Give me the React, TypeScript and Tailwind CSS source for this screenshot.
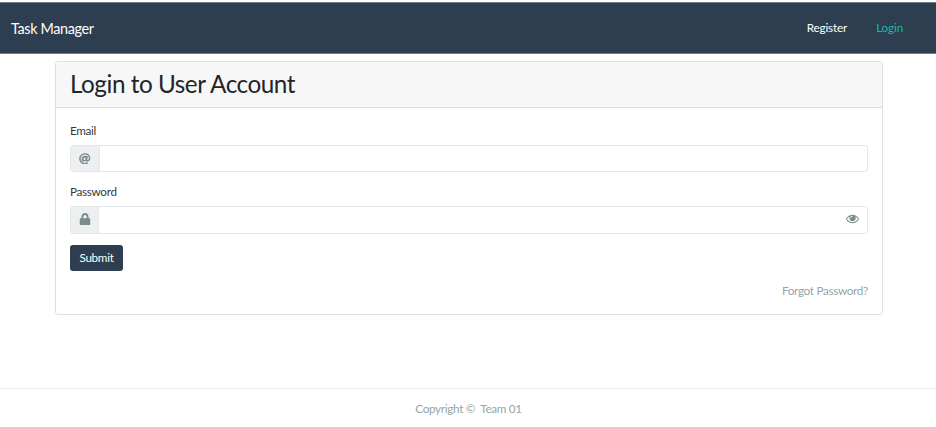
import { useState } from "react";
import { FaAt, FaLock } from "react-icons/fa";

function EyeIcon() {
  return (
    <svg width="13" height="13" viewBox="0 0 1792 1792" fill="currentColor" aria-hidden="true">
      <path d="M1664 960q-152-236-381-353 61 104 61 225 0 185-131.5 316.5t-316.5 131.5-316.5-131.5-131.5-316.5q0-121 61-225-229 117-381 353 133 205 333.5 326.5t434.5 121.5 434.5-121.5 333.5-326.5zm-720-384q0-20-14-34t-34-14q-125 0-214.5 89.5t-89.5 214.5q0 20 14 34t34 14 34-14 14-34q0-86 61-147t147-61q20 0 34-14t14-34zm848 384q0 34-20 69-140 230-376.5 368.5t-499.5 138.5-499.5-139-376.5-368q-20-35-20-69t20-69q140-229 376.5-368t499.5-139 499.5 139 376.5 368q20 35 20 69z" />
    </svg>
  );
}

export default function App() {
  const [visible, setVisible] = useState(false);

  return (
    <div className="flex h-[427px] w-full flex-col overflow-hidden bg-white font-[Lato,sans-serif] text-[11.7px] leading-[18px] tracking-[-0.3px] text-[#212529]">
      <nav className="mt-0.5 flex h-[52px] shrink-0 items-center justify-between border-y border-[#708090] bg-[#2c3e50] pl-[11px] pr-[33px] text-white">
        <a href="#" className="pt-px text-[14.4px] tracking-[-0.35px]">Task Manager</a>
        <div className="flex gap-[29px] pb-[2px] tracking-[-0.15px]">
          <a href="#">Register</a>
          <a href="#" className="text-[#18bc9c]">Login</a>
        </div>
      </nav>

      <main className="ml-[55px] mt-[7px] flex h-[254px] w-[828px] shrink-0 flex-col rounded-[3px] border border-[#e0e0e0]">
        <header className="flex h-[46px] shrink-0 items-center border-b border-[#dfdfdf] bg-[#f7f7f7] px-[14px] pb-px">
          <h1 className="text-[24.3px] leading-[30px] tracking-[-0.47px]">Login to User Account</h1>
        </header>
        <form className="flex flex-col px-[14px] pt-[13px]" onSubmit={(e) => e.preventDefault()}>
          <label htmlFor="email" className="text-[#343a3e]">Email</label>
          <div className="mt-[6px] flex h-[27px] overflow-hidden rounded-[3px] border border-[#e3e7e9]">
            <span className="flex w-[29px] items-center justify-center border-r border-[#e3e7e9] bg-[#ecf0f1] text-[#7b8a8b]">
              <FaAt size={11.5} />
            </span>
            <input id="email" type="email" className="min-w-0 flex-1 px-2 outline-none" />
          </div>
          <label htmlFor="password" className="mt-[10px] text-[#343a3e]">Password</label>
          <div className="mt-[6px] flex h-[28px] overflow-hidden rounded-[3px] border border-[#e3e7e9]">
            <span className="flex w-[28px] items-center justify-center border-r border-[#e3e7e9] bg-[#ecf0f1] pb-[2px] text-[#7b8a8b]">
              <FaLock size={12} />
            </span>
            <input id="password" type={visible ? "text" : "password"} className="min-w-0 flex-1 px-2 outline-none" />
            <button type="button" aria-label="Show password" className="pb-[3px] pr-[8px] text-[#7b8a8b]" onClick={() => setVisible(!visible)}>
              <EyeIcon />
            </button>
          </div>
          <button type="submit" className="mt-[11px] h-[26px] w-[53px] rounded-[3px] bg-[#2c3e50] pb-[2px] text-white">Submit</button>
          <a href="#" className="mt-[10px] self-end text-[#95a5a6]">Forgot Password?</a>
        </form>
      </main>

      <footer className="mt-[73px] flex h-[39px] shrink-0 items-center justify-center whitespace-pre border-t border-[#eeeeee] pb-px pl-px text-[#95a5a6]">
        {"Copyright ©  Team 01"}
      </footer>
    </div>
  );
}
